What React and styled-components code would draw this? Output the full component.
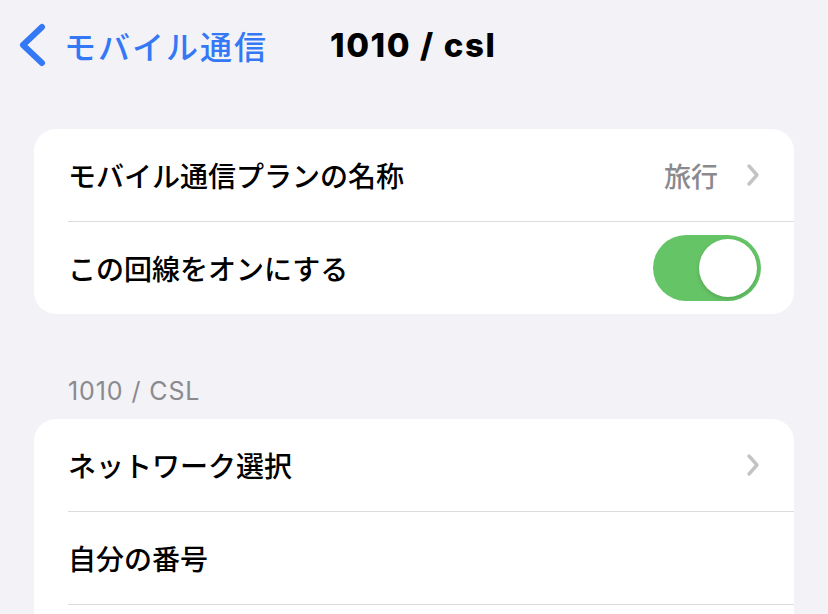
import React, { useState } from "react";
import styled, { createGlobalStyle } from "styled-components";

const GlobalStyle = createGlobalStyle`
  html, body {
    margin: 0;
    padding: 0;
    background: #f2f2f7;
  }
  body {
    font-family: "Inter", "Noto Sans CJK JP", sans-serif;
    -webkit-font-smoothing: antialiased;
    overflow: hidden;
  }
`;

const Page = styled.div`
  width: 828px;
  height: 614px;
  overflow: hidden;
  background: #f2f2f7;
`;

const NavBar = styled.div`
  height: 90px;
  display: flex;
  align-items: center;
  padding-left: 18px;
`;

const BackButton = styled.button`
  display: flex;
  align-items: center;
  gap: 18px;
  border: none;
  background: none;
  padding: 0;
  cursor: pointer;
  color: #3478f6;
  font-family: "Noto Sans CJK JP", sans-serif;
  font-size: 32px;
  font-weight: 500;
  letter-spacing: 2px;
`;

const Title = styled.h1`
  margin: 0 0 0 62px;
  font-family: "Inter", sans-serif;
  font-size: 33px;
  font-weight: 800;
  color: #000;
  letter-spacing: 1.6px;
`;

const Content = styled.div`
  padding: 0 34px;
`;

const Card = styled.div`
  background: #fff;
  border-radius: 22px;
  overflow: hidden;
  margin-top: ${p => p.$top || 0}px;
`;

const Row = styled.div`
  padding-left: 34px;
`;

const RowInner = styled.div`
  height: 92px;
  display: flex;
  align-items: center;
  justify-content: space-between;
  padding-right: 34px;
  border-bottom: ${p => (p.$last ? "none" : "1px solid #dcdce0")};
`;

const Label = styled.span`
  font-family: "Noto Sans CJK JP", sans-serif;
  font-size: 28px;
  font-weight: 500;
  color: #000;
`;

const Trail = styled.div`
  display: flex;
  align-items: center;
  gap: 26px;
`;

const Value = styled.span`
  font-family: "Noto Sans CJK JP", sans-serif;
  font-size: 27px;
  font-weight: 500;
  color: #8a8a8e;
  margin-right: 2px;
`;

const SectionHeader = styled.div`
  margin: 63px 0 14px;
  padding-left: 34px;
  line-height: 28px;
  font-family: "Inter", sans-serif;
  font-size: 25px;
  color: #8a8a8e;
  letter-spacing: 0.9px;
`;

const Track = styled.button`
  width: 108px;
  height: 66px;
  border: none;
  border-radius: 33px;
  padding: 0;
  background: ${p => (p.$on ? "#65c466" : "#e9e9eb")};
  position: relative;
  cursor: pointer;
  margin-right: -1px;
`;

const Knob = styled.span`
  position: absolute;
  top: 4px;
  left: ${p => (p.$on ? "46px" : "4px")};
  width: 58px;
  height: 58px;
  border-radius: 50%;
  background: #fff;
  box-shadow: 0 2px 4px rgba(0, 0, 0, 0.15);
  transition: left 0.2s;
`;

const BackChevron = () => (
  <svg width="28" height="44" viewBox="0 0 28 44">
    <polyline
      points="24,4 5,22 24,40"
      fill="none"
      stroke="#3478f6"
      strokeWidth="6"
      strokeLinecap="round"
      strokeLinejoin="round"
    />
  </svg>
);

const Chevron = () => (
  <svg width="14" height="24" viewBox="0 0 14 24">
    <polyline
      points="3,3 11,12 3,21"
      fill="none"
      stroke="#c4c4c7"
      strokeWidth="3.4"
      strokeLinecap="round"
      strokeLinejoin="round"
    />
  </svg>
);

const Toggle = () => {
  const [on, setOn] = useState(true);
  return (
    <Track $on={on} onClick={() => setOn(!on)}>
      <Knob $on={on} />
    </Track>
  );
};

export default function App() {
  return (
    <Page>
      <GlobalStyle />
      <NavBar>
        <BackButton>
          <BackChevron />
          モバイル通信
        </BackButton>
        <Title>1010 / csl</Title>
      </NavBar>
      <Content>
        <Card $top={39}>
          <Row>
            <RowInner>
              <Label>モバイル通信プランの名称</Label>
              <Trail>
                <Value>旅行</Value>
                <Chevron />
              </Trail>
            </RowInner>
          </Row>
          <Row>
            <RowInner $last>
              <Label>この回線をオンにする</Label>
              <Toggle />
            </RowInner>
          </Row>
        </Card>
        <SectionHeader>1010 / CSL</SectionHeader>
        <Card>
          <Row>
            <RowInner>
              <Label>ネットワーク選択</Label>
              <Chevron />
            </RowInner>
          </Row>
          <Row>
            <RowInner>
              <Label>自分の番号</Label>
            </RowInner>
          </Row>
          <Row>
            <RowInner $last />
          </Row>
        </Card>
      </Content>
    </Page>
  );
}
